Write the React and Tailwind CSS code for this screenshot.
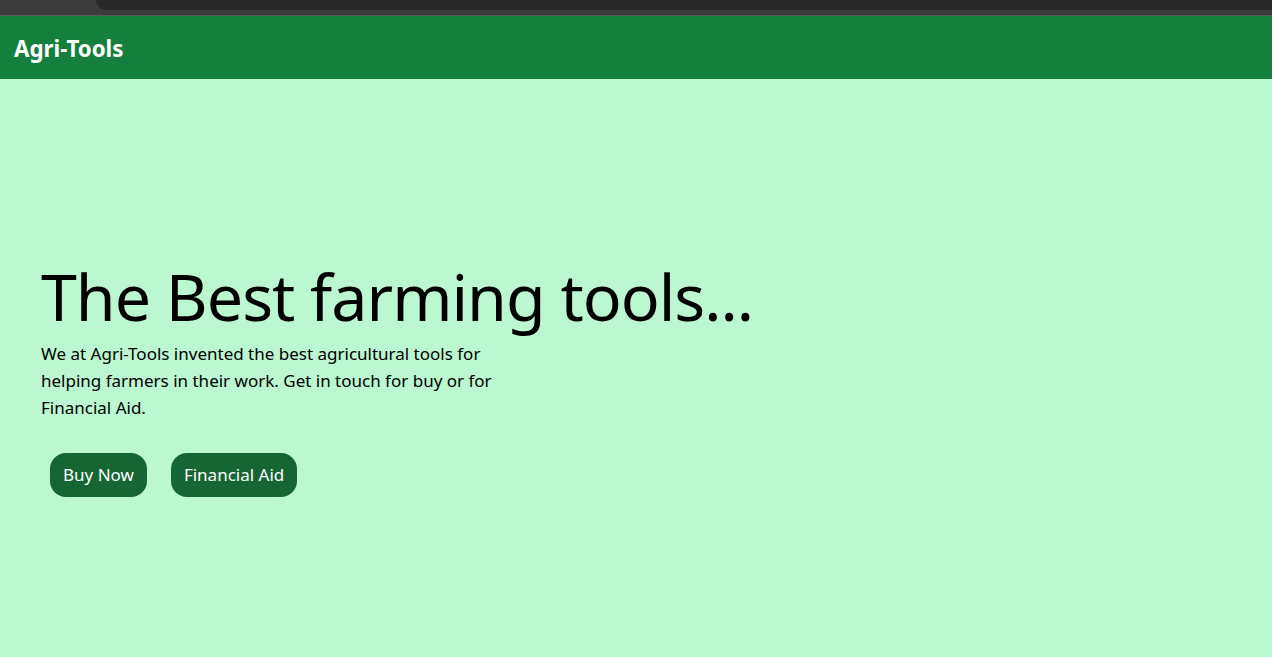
const font = { fontFamily: '"Noto Sans", "Open Sans", sans-serif' }

export default function App() {
  return (
    <div className="min-h-screen bg-white" style={font}>
      {/* browser chrome sliver */}
      <div className="h-[16px] bg-[#3c3c3c] border-b border-[#5a5a5a] flex">
        <div className="w-[96px]" />
        <div className="flex-1 h-[10px] bg-[#282828] rounded-bl-[10px]" />
      </div>

      {/* navbar */}
      <nav className="h-[63px] bg-[#15803d] flex items-center px-[14px]">
        <span className="text-white font-bold text-[22.3px] mt-[2px]">Agri-Tools</span>
      </nav>

      {/* hero */}
      <main className="h-[578px] bg-[#bbf7d0] px-[41px] pt-[177px]">
        <h1 className="text-[64.5px] leading-[80px] text-black tracking-[-1px]">The Best farming tools...</h1>
        <p className="text-[17px] leading-[27px] text-black mt-[4px]">
          We at Agri-Tools invented the best agricultural tools for<br />
          helping farmers in their work. Get in touch for buy or for<br />
          Financial Aid.
        </p>
        <div className="flex gap-[24px] mt-[32px] ml-[9px]">
          <button className="h-[44px] px-[13px] rounded-[16px] bg-[#166534] text-white text-[17px]">Buy Now</button>
          <button className="h-[44px] px-[13px] rounded-[16px] bg-[#166534] text-white text-[17px]">Financial Aid</button>
        </div>
      </main>
    </div>
  )
}
